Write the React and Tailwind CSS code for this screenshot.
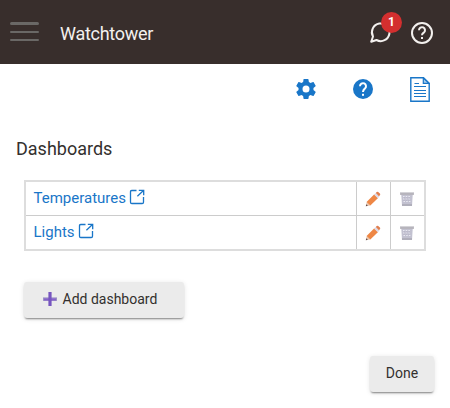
import React from "react";

function Gear() {
  return (
    <svg className="size-6" viewBox="0 0 24 24" fill="#1976c8">
      <path d="M12 15.5A3.5 3.5 0 0 1 8.5 12 3.5 3.5 0 0 1 12 8.5a3.5 3.5 0 0 1 3.5 3.5 3.5 3.5 0 0 1-3.5 3.5m7.43-2.53c.04-.32.07-.64.07-.97s-.03-.66-.07-1l2.11-1.63c.19-.15.24-.42.12-.64l-2-3.46c-.12-.22-.39-.31-.61-.22l-2.49 1c-.52-.39-1.06-.73-1.69-.98l-.37-2.65A.506.506 0 0 0 14 2h-4c-.25 0-.46.18-.5.42l-.37 2.65c-.63.25-1.17.59-1.69.98l-2.49-1c-.22-.09-.49 0-.61.22l-2 3.46c-.13.22-.07.49.12.64L4.57 11c-.04.34-.07.67-.07 1s.03.65.07.97l-2.11 1.66c-.19.15-.25.42-.12.64l2 3.46c.12.22.39.3.61.22l2.49-1.01c.52.4 1.06.74 1.69.99l.37 2.65c.04.24.25.42.5.42h4c.25 0 .46-.18.5-.42l.37-2.65c.63-.26 1.17-.59 1.69-.99l2.49 1.01c.22.08.49 0 .61-.22l2-3.46c.12-.22.07-.49-.12-.64z" />
    </svg>
  );
}

function HelpSolid() {
  return (
    <svg className="size-6" viewBox="0 0 24 24">
      <circle cx="12" cy="12" r="10" fill="#1976c8" />
      <path d="M9 9.2a3 3 0 1 1 4.9 2.3C12.7 12.5 12 13 12 15" fill="none" stroke="#fff" strokeWidth="2" />
      <rect x="11" y="16.8" width="2" height="2" fill="#fff" />
    </svg>
  );
}

function DocIcon() {
  return (
    <svg className="w-5 h-[25px]" viewBox="0 0 20 25" fill="none" stroke="#1976c8">
      <path d="M.8.8h12.7l5.7 5.4v18H.8z" strokeWidth="1.4" />
      <path d="M13.3 1v5.3H19z" strokeWidth="1.2" fill="#a9cdec" />
      <path d="M4.5 6.5H9M4 9.5h12M4 13.5h12M4 16.5h12M4 19.5h12" strokeWidth="1" />
    </svg>
  );
}

function OpenIcon() {
  return (
    <svg className="w-4 h-4" viewBox="0 0 16 16" fill="none" stroke="#1976c8" strokeWidth="1.3">
      <path d="M7.5 1.5H2.8Q1.5 1.5 1.5 2.8v10.4q0 1.3 1.3 1.3h10.4q1.3 0 1.3-1.3V8M8.4 7.2l5.8-5.4M9.8 1.3h4.9v4.9" />
    </svg>
  );
}

function Pencil() {
  return (
    <svg className="size-4" viewBox="0 0 16 16">
      <path d="m.8 15.2 1-4.4 3.6 3.6z" fill="#e9c6ae" />
      <path d="m.8 15.2.5-2 1.6 1.5z" fill="#5d4b4b" />
      <path d="m1.6 10.9 7.7-7.6 3.8 3.6-7.8 7.5z" fill="#ee8745" />
      <path d="m9 3.6 1.8-1.7 3.7 3.6-1.7 1.7z" fill="#dedbe8" />
      <path d="m10.8 1.9.9-.9q.8-.6 1.5 0l1.7 1.5q.8.9 0 1.7l-1 1z" fill="#e07f4f" />
    </svg>
  );
}

function Trash() {
  return (
    <svg className="size-4" viewBox="0 0 16 16">
      <path d="M2.3 3.5h11.4L13 15H3z" fill="#c2c1d0" />
      <path d="M1 1.3h14v2.6H1z" fill="#c2c0c8" />
      <path d="M1.5 3h13" stroke="#aaa8b0" />
      <path d="M4 5.5h8M4 8h8M4.5 10.5h7" stroke="#e9e9f2" strokeWidth="1.1" strokeDasharray="1.5 1.2" />
      <path d="M5 6.8h7M4.5 9.2h7" stroke="#b4b2c6" strokeWidth="1" strokeDasharray="1 1.4" />
      <path d="M3 14h10" stroke="#aaa8b4" strokeWidth="1.5" />
    </svg>
  );
}

function Row({ name, last }) {
  return (
    <div className={last ? "flex h-[33px]" : "flex h-[34px] border-b border-[#ccc]"}>
      <div className="flex flex-1 items-center gap-[3px] pl-[7.5px] text-[15px] text-[#1976c8]">
        <span>{name}</span>
        <span className="-mt-[3px]"><OpenIcon /></span>
      </div>
      <div className="flex w-[34px] items-center border-l border-[#ccc] pl-2 pt-px"><Pencil /></div>
      <div className="flex w-[34px] items-center border-l border-[#ccc] pl-2 pt-px"><Trash /></div>
    </div>
  );
}

export default function App() {
  return (
    <div className="h-[408px] w-[450px] overflow-hidden bg-white font-['Roboto','Liberation_Sans',sans-serif] text-[#33302e]">
      <header className="flex h-16 items-start bg-[#382e2c]">
        <div className="ml-[10px] mt-[22px] flex w-[29px] flex-col">
          <span className="h-[3px] rounded-full bg-[#6a6866]" />
          <span className="mt-[6px] h-[2px] rounded-full bg-[#6a6866]" />
          <span className="mt-[6px] h-[2px] rounded-full bg-[#6a6866]" />
        </div>
        <h1 className="ml-[21px] mt-5 text-lg leading-7 tracking-[-0.28px] text-[#f3f0ee]">Watchtower</h1>
        <div className="relative ml-auto mr-4 mt-[21px] flex gap-[18px]">
          <svg className="size-6" viewBox="0 0 24 24" fill="none" stroke="#f3f0ee" strokeWidth="2" strokeLinejoin="round">
            <path d="M3.2 20.8 5 15.5A8.8 8.8 0 1 1 8.5 19z" />
          </svg>
          <svg className="size-6" viewBox="0 0 24 24" fill="none" stroke="#f3f0ee" strokeWidth="2">
            <circle cx="12" cy="12" r="10" />
            <path d="M9 9.2a3 3 0 1 1 4.9 2.3C12.7 12.5 12 12.8 12 14.3" />
            <path d="M11 17h2" />
          </svg>
          <span className="absolute -top-[9px] left-[13px] flex size-[21px] items-center justify-center rounded-full bg-[#d32f2f] pb-px text-xs font-bold text-white">1</span>
        </div>
      </header>
      <div className="flex h-[50px] items-center justify-end pr-5">
        <Gear />
        <span className="ml-[33px]"><HelpSolid /></span>
        <span className="ml-[35px]"><DocIcon /></span>
      </div>
      <h2 className="ml-4 mt-[21px] text-lg leading-7">Dashboards</h2>
      <div className="ml-6 mt-[17px] w-[402px] border-2 border-[#ddd]">
        <Row name="Temperatures" />
        <Row name="Lights" last />
      </div>
      <button className="ml-6 mt-[31px] flex h-9 w-[160px] items-center rounded-[3px] bg-[#ebebeb] pb-[2px] pl-[17.5px] text-sm shadow-[0_2px_2px_-1px_rgba(0,0,0,0.45),0_1px_5px_rgba(0,0,0,0.12)]">
        <svg className="size-4" viewBox="0 0 16 16">
          <path d="M1 6.4h14v3.5H1z" fill="#9b8fc4" />
          <path d="M2 7.5h12v2H2z" fill="#8662ca" />
          <path d="M6.4 1h3.2v14H6.4z" fill="#7655bf" />
        </svg>
        <span className="ml-[5px]">Add dashboard</span>
      </button>
      <button className="ml-[370px] mt-[38px] flex h-9 w-16 items-center justify-center rounded-[3px] bg-[#ebebeb] pb-[2px] text-sm shadow-[0_2px_2px_-1px_rgba(0,0,0,0.45),0_1px_5px_rgba(0,0,0,0.12)]">
        Done
      </button>
    </div>
  );
}
